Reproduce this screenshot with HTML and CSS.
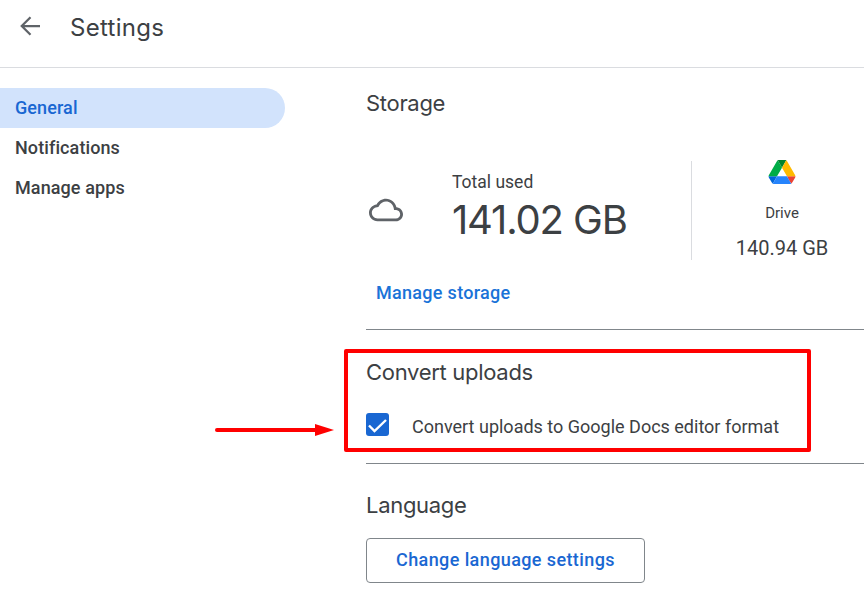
FILE: index.html
```html
<!DOCTYPE html>
<html lang="en">
<head>
<meta charset="utf-8">
<title>Settings</title>
<link rel="stylesheet" href="styles.css">
</head>
<body>
<header class="topbar">
  <svg class="back" width="30" height="30" viewBox="0 0 24 24"><path d="M20 12H5.6M12.4 5l-7 7 7 7"/></svg>
  <h1 class="title">Settings</h1>
</header>
<div class="layout">
  <nav class="sidebar">
    <a class="nav-item active">General</a>
    <a class="nav-item">Notifications</a>
    <a class="nav-item">Manage apps</a>
  </nav>
  <main class="content">
    <section class="storage">
      <h2 class="heading">Storage</h2>
      <div class="usage">
        <svg class="cloud" width="34" height="34" viewBox="0 0 24 24"><path d="M12 6c2.62 0 4.88 1.86 5.39 4.43l.3 1.5 1.53.11c1.56.1 2.78 1.41 2.78 2.96 0 1.65-1.35 3-3 3H6c-2.21 0-4-1.79-4-4 0-2.05 1.53-3.76 3.56-3.97l1.07-.11.5-.95C8.08 7.14 9.94 6 12 6m0-2C9.11 4 6.6 5.64 5.35 8.04 2.34 8.36 0 10.91 0 14c0 3.31 2.69 6 6 6h13c2.76 0 5-2.24 5-5 0-2.64-2.05-4.78-4.65-4.96C18.67 6.59 15.64 4 12 4z"/></svg>
        <div class="total">
          <div class="total-label">Total used</div>
          <div class="total-value">141.02 GB</div>
        </div>
        <div class="drive">
          <svg class="drive-logo" width="28" height="25" viewBox="0 0 87.3 78">
            <path fill="#0066da" d="m6.6 66.85 3.85 6.65c.8 1.4 1.95 2.5 3.3 3.3l13.75-23.8H0c0 1.55.4 3.1 1.2 4.5z"/>
            <path fill="#00ac47" d="M43.65 25 29.9 1.2c-1.35.8-2.5 1.9-3.3 3.3L1.2 48.5A9 9 0 0 0 0 53h27.5z"/>
            <path fill="#ea4335" d="M73.55 76.8c1.35-.8 2.5-1.9 3.3-3.3l1.6-2.75L86.1 57.5c.8-1.4 1.2-2.95 1.2-4.5H59.8l5.85 11.5z"/>
            <path fill="#00832d" d="M43.65 25 57.4 1.2C56.05.4 54.5 0 52.9 0H34.4c-1.6 0-3.15.45-4.5 1.2z"/>
            <path fill="#2684fc" d="M59.8 53H27.5L13.75 76.8c1.35.8 2.9 1.2 4.5 1.2h50.8c1.6 0 3.15-.45 4.5-1.2z"/>
            <path fill="#ffba00" d="M73.4 26.5 60.7 4.5c-.8-1.4-1.95-2.5-3.3-3.3L43.65 25 59.8 53h27.45c0-1.55-.4-3.1-1.2-4.5z"/>
          </svg>
          <div class="drive-name">Drive</div>
          <div class="drive-value">140.94 GB</div>
        </div>
      </div>
      <a class="manage">Manage storage</a>
    </section>
    <section class="convert">
      <h2 class="heading">Convert uploads</h2>
      <label class="check-row">
        <span class="checkbox"><svg width="23" height="23" viewBox="0 0 23 23"><path d="M3 12.5l5.5 5.5L20 7" fill="none" stroke="#fff" stroke-width="2.4"/></svg></span>
        <span class="check-label">Convert uploads to Google Docs editor format</span>
      </label>
    </section>
    <section class="language">
      <h2 class="heading">Language</h2>
      <button class="lang-btn">Change language settings</button>
    </section>
  </main>
</div>
<div class="callout"></div>
<svg class="arrow" width="122" height="14" viewBox="0 0 122 14"><path d="M4 7H104" stroke="#f00" stroke-width="4" stroke-linecap="round"/><path d="M102 1l19 6-19 6z" fill="#f00"/></svg>
</body>
</html>
```
FILE: styles.css
```css
* { box-sizing: border-box; }
html, body { margin: 0; height: 100%; overflow: hidden; }
body { background: #fff; color: #3c4043; font-family: Roboto, "Liberation Sans", sans-serif; position: relative; }
.topbar { height: 68px; border-bottom: 1px solid #dadce0; display: flex; align-items: center; padding: 0 0 12px 15px; }
.back { fill: none; stroke: #5f6368; stroke-width: 1.8; flex: none; margin-top: -3px; }
.title { margin: 0 0 0 25px; font: 400 24px/32px Inter, Roboto, sans-serif; letter-spacing: .3px; color: #3c4043; }
.layout { display: flex; }
.sidebar { width: 285px; flex: none; padding-top: 20px; display: flex; flex-direction: column; }
.nav-item { height: 40px; line-height: 40px; padding-left: 15px; font-size: 18px; letter-spacing: .1px; font-weight: 500; color: #3c4043; border-radius: 0 20px 20px 0; }
.nav-item.active { background: #d2e3fc; color: #1967d2; }
.content { margin-left: 81px; flex: 1; min-width: 0; }
.heading { margin: 0; font: 400 22px/28px Inter, Roboto, sans-serif; letter-spacing: -.3px; color: #3c4043; }
.storage { height: 262px; border-bottom: 1px solid #80868b; padding-top: 21px; }
.usage { display: flex; margin-top: 44px; height: 99px; }
.cloud { fill: #5f6368; flex: none; margin: 32px 0 0 3px; }
.total { width: 240px; margin-left: 49px; padding-top: 10px; flex: none; border-right: 1px solid #dadce0; }
.total-label { font-size: 17.5px; line-height: 22px; }
.total-value { font: 400 40px/48px Inter, Roboto, sans-serif; letter-spacing: -1.15px; margin-top: 3px; }
.drive { margin-left: 44px; width: 92px; text-align: center; display: flex; flex-direction: column; align-items: center; flex: none; }
.drive-logo { display: block; margin-top: -1px; }
.drive-name { font-size: 15px; line-height: 20px; margin-top: 19px; }
.drive-value { font-size: 20px; line-height: 24px; margin-top: 13px; white-space: nowrap; }
.manage { display: block; margin: 21px 0 0 10px; font-size: 18px; letter-spacing: .3px; font-weight: 500; line-height: 24px; color: #1a73d8; }
.convert { height: 134px; border-bottom: 1px solid #80868b; padding-top: 28px; }
.check-row { display: flex; align-items: flex-start; margin-top: 27px; }
.checkbox { width: 23px; height: 23px; background: #1967d2; border-radius: 3px; flex: none; display: block; }
.checkbox svg { display: block; }
.check-label { margin: 2px 0 0 23px; font-size: 18px; line-height: 24px; }
.language { padding-top: 27px; }
.lang-btn { display: block; margin-top: 19px; width: 279px; height: 45px; padding: 0 0 2px; background: #fff; border: 1px solid #80868b; border-radius: 4px; color: #1a67d2; font: 500 18px Roboto, sans-serif; letter-spacing: .4px; }
.callout { position: absolute; left: 344px; top: 349px; width: 467px; height: 103px; border: 4px solid #f00; border-radius: 2px; }
.arrow { position: absolute; left: 213px; top: 423px; }
```
